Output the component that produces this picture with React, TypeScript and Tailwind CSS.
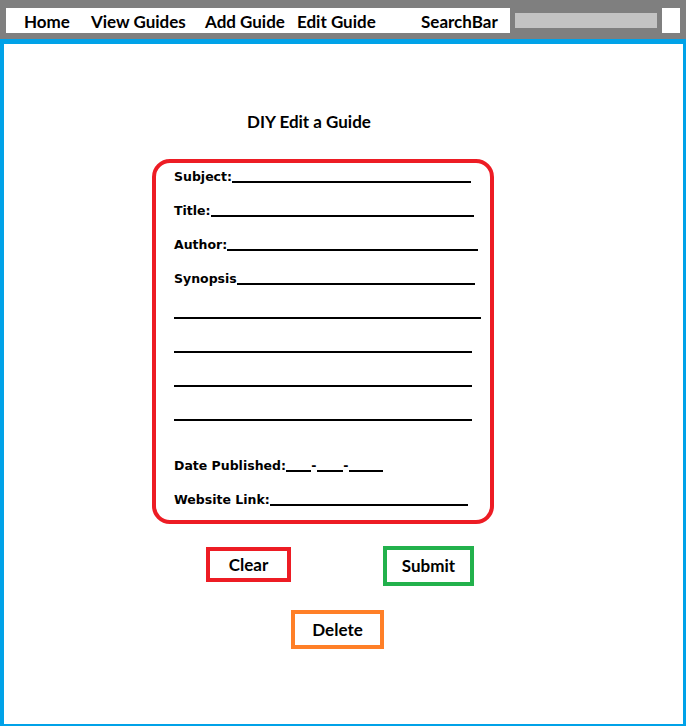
import React from 'react';

const navItems = [
  { label: 'Home', w: 'w-[67px]' },
  { label: 'View Guides', w: 'w-[114px]' },
  { label: 'Add Guide', w: 'w-[92px]' },
  { label: 'Edit Guide', w: 'w-[124px]' },
  { label: 'SearchBar', w: 'w-[89px]' },
];

const NavBar: React.FC = () => (
  <div className="h-[39px] bg-[#7f7f7f] pt-[8px] pb-[6px] px-[6px]">
    <div className="h-full bg-white flex items-stretch pl-[18px]">
      {navItems.map(item => (
        <span
          key={item.label}
          className={`${item.w} shrink-0 pt-[3px] leading-[22px] text-[17px] font-bold text-black whitespace-nowrap`}
        >
          {item.label}
        </span>
      ))}
      <div className="w-[152px] shrink-0 bg-[#7f7f7f] p-[5px]">
        <div className="h-full bg-[#c3c3c3]" />
      </div>
    </div>
  </div>
);

// one label + underline row; width sets where the line stops
const FieldRow: React.FC<{ label?: string; w: string; className?: string }> = ({ label, w, className }) => (
  <div className={`${w} h-[20px] flex items-end ${className ?? ''}`}>
    {label && <span className="text-[12.5px] leading-none font-bold whitespace-nowrap field-label">{label}</span>}
    <span className="flex-1 border-b-2 border-black" />
  </div>
);

const GuideForm: React.FC = () => (
  <div className="ml-[148px] mt-[27px] w-[342px] h-[365px] border-4 border-[#ed1c24] rounded-[18px] pl-[18px] flex flex-col gap-[14px]">
    <FieldRow label="Subject:" w="w-[297px]" />
    <FieldRow label="Title:" w="w-[300px]" />
    <FieldRow label="Author:" w="w-[304px]" />
    <FieldRow label="Synopsis" w="w-[301px]" />
    <FieldRow w="w-[307px]" />
    <FieldRow w="w-[298px]" />
    <FieldRow w="w-[298px]" />
    <FieldRow w="w-[298px]" />
    <div className="mt-[17px] h-[20px] flex items-end text-[12.5px] leading-none font-bold field-label">
      <span className="whitespace-nowrap">Date Published:</span>
      <span className="w-[25px] border-b-2 border-black" />
      <span className="w-[6px] text-center">-</span>
      <span className="w-[26px] border-b-2 border-black" />
      <span className="w-[6px] text-center">-</span>
      <span className="w-[34px] border-b-2 border-black" />
    </div>
    <FieldRow label="Website Link:" w="w-[294px]" />
  </div>
);

export default function App() {
  return (
    <div className="w-[686px] h-[726px] bg-white text-black font-['Lato','Liberation_Sans',sans-serif] flex flex-col">
      <style>{`.field-label{font-family:"DejaVu Sans",sans-serif;}`}</style>
      <NavBar />
      <div className="flex-1 border-[#00a2e8] border-l-4 border-r-[3px] border-t-[5px] border-b-2 flex flex-col">
        <h1 className="mt-[68px] pl-[243px] text-[17px] leading-[20px] font-bold">DIY Edit a Guide</h1>
        <GuideForm />
        <div className="mt-[22px] flex items-start">
          <button className="ml-[202px] mt-[1px] w-[85px] h-[35px] border-4 border-[#ed1c24] text-[17px] font-bold flex items-center justify-center">
            Clear
          </button>
          <button className="ml-[92px] w-[91px] h-[40px] border-4 border-[#22b14c] text-[17px] font-bold flex items-center justify-center">
            Submit
          </button>
        </div>
        <div className="mt-[24px] flex">
          <button className="ml-[287px] w-[93px] h-[39px] border-4 border-[#ff7f27] text-[17px] font-bold flex items-center justify-center">
            Delete
          </button>
        </div>
      </div>
    </div>
  );
}
